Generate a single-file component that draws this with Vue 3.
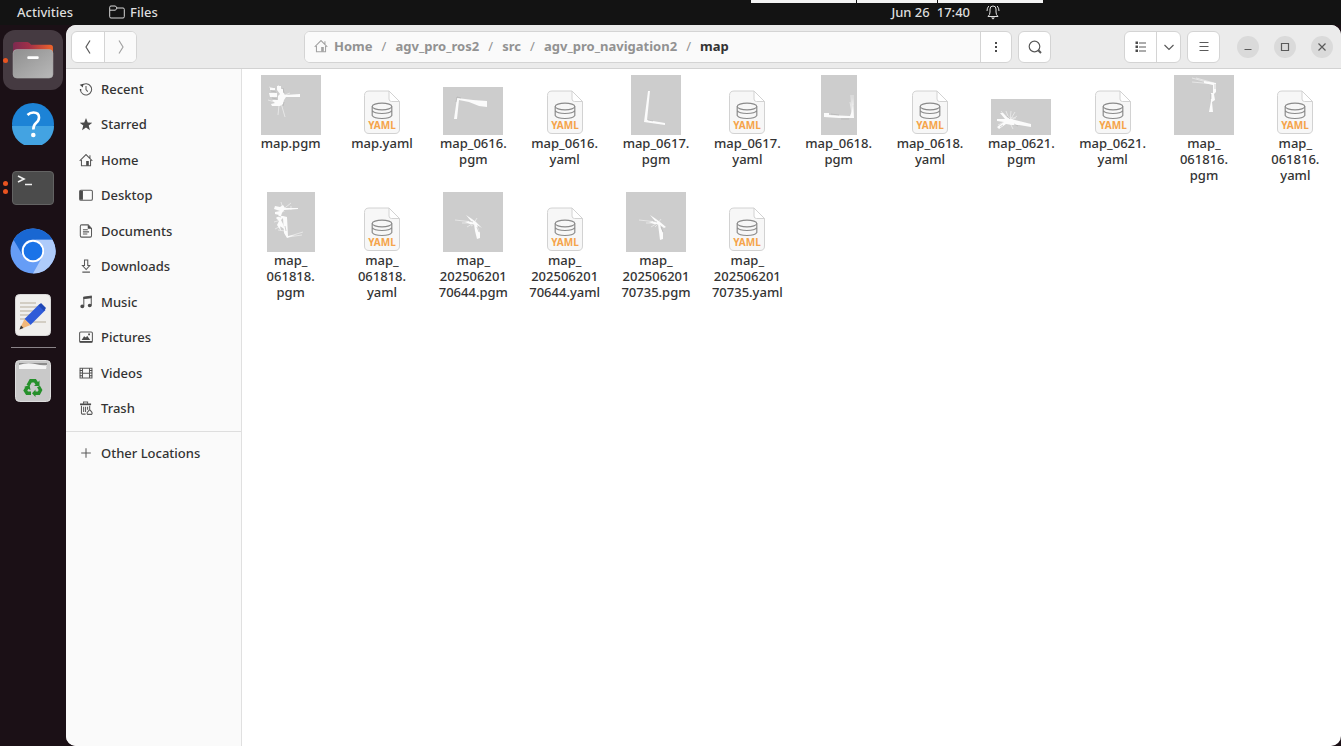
<script setup>
import { ref } from 'vue';

const activePlace = ref('');

const places = [
  {
    name: 'Recent',
    stroke: 'M3.2 4.2A6.4 6.4 0 1 1 1.6 8.6M8 4.5V8.6L10 11',
    fill: 'M0.8 3.2L5 2L4.4 6.2zM1 8h1.6v1.6H1z'
  },
  {
    name: 'Starred',
    stroke: '',
    fill: 'M8 1.2L10 6.2L15.2 6.5L11.1 9.8L12.5 15L8 12L3.5 15L4.9 9.8L0.8 6.5L6 6.2z'
  },
  {
    name: 'Home',
    stroke: 'M0.8 9L8 1.8L15.2 9M2.8 8V14.5H13.2V8M12.5 2.5V6',
    fill: 'M8.2 9h3v5.5h-3z'
  },
  {
    name: 'Desktop',
    stroke: 'M2.2 2.5H13.8Q15.3 2.5 15.3 4V12.5Q15.3 14 13.8 14H2.2Q0.7 14 0.7 12.5V4Q0.7 2.5 2.2 2.5z',
    fill: 'M1 3h3.5v10.5H1z'
  },
  {
    name: 'Documents',
    stroke: 'M3 1H10.5L14.3 5V13.5Q14.3 15 12.8 15H3Q1.5 15 1.5 13.5V2.5Q1.5 1 3 1zM4.5 6.5H10M4.5 9H11.5M4.5 11.5H9.5',
    fill: 'M10 1L14.5 5.5H10z'
  },
  {
    name: 'Downloads',
    stroke: 'M6.3 1.2H10V7.5H12.3L8.2 12L4 7.5H6.3zM3.8 15H12.5',
    fill: ''
  },
  {
    name: 'Music',
    stroke: 'M5.5 13V2.5L14 1.2V12M5.5 4L14 2.8',
    fill: 'M1.5 13a2.1 1.9 0 1 0 4.5 0a2.1 1.9 0 1 0-4.5 0M10 12a2.1 1.9 0 1 0 4.5 0a2.1 1.9 0 1 0-4.5 0M5 2.2L14.5 1v2.3L5 4.5z'
  },
  {
    name: 'Pictures',
    stroke: 'M2 2.2H14Q15.3 2.2 15.3 3.5V12.5Q15.3 14 14 14H2Q0.7 14 0.7 12.5V3.5Q0.7 2.2 2 2.2z',
    fill: 'M3 11.5L5.8 7L8 8.5L9.3 6.5L12.8 11.5zM10.5 4h2v2h-2zM1 12.5h14v1.8H1z'
  },
  {
    name: 'Videos',
    stroke: 'M1.2 2.5H14.8V13.8H1.2zM4 2.5V13.8M12 2.5V13.8M4 8.2H12',
    fill: 'M1 4.5h2.5v1.2H1zM1 7.5h2.5v1.2H1zM1 10.5h2.5v1.2H1zM12.5 4.5H15v1.2h-2.5zM12.5 7.5H15v1.2h-2.5zM12.5 10.5H15v1.2h-2.5z'
  },
  {
    name: 'Trash',
    stroke: 'M2.8 5.5V14Q2.8 15 4 15H7.5M12.2 5.5V9M5.3 6.5V12.5M7.5 6.5V12.5M9.8 6.5V10M5.2 3V1.2H9.8V3M9.8 15.3Q8.6 13.6 10 12.5L12.2 9.8L14.4 12.5Q15.6 14 14.4 15.3z',
    fill: 'M1.2 2.8h12.6v2H1.2z'
  }
];

const crumbs = ['Home', 'agv_pro_ros2', 'src', 'agv_pro_navigation2', 'map'];

// Occupancy maps: free space is white on the grey unknown area,
// rays are the thin laser traces around it and edges the dark walls
const pgm = (lines, width, height, map) => ({
  type: 'pgm', label: lines.join('\n'), width, height, ...map
});
const yaml = (...lines) => ({ type: 'yaml', label: lines.join('\n') });

const files = [
  pgm(['map.pgm'], 60, 60, {
    shape: 'M9 13H14V15H9zM8 18H16V22H9zM16 11H20V14H22V17L24 20L39 19V22L25 22L23 25L22 29L19 31H11L10 29L14 28L11 25L17 25V21L19 19L16 15z',
    rays: 'M8 12L14 14M17 10L20 14M20 28L24 42M18 30L17 40M7 25L14 27M24 20L29 18',
    edges: 'M10 16L15 17M11 23L16 24M22 13L23 18M23 27L22 31'
  }),
  yaml('map.yaml'),
  pgm(['map_0616.', 'pgm'], 60, 48, {
    shape: 'M14 11L30 13L44 14V20L36 19L26 15L16 13L14 32H11z',
    rays: '',
    edges: 'M13 15L14 10L18 11'
  }),
  yaml('map_0616.', 'yaml'),
  pgm(['map_0617.', 'pgm'], 50, 60, {
    shape: 'M17 16H19L16 45L34 48V50L13 47z',
    rays: '',
    edges: 'M17 45L22 46'
  }),
  yaml('map_0617.', 'yaml'),
  pgm(['map_0618.', 'pgm'], 36, 60, {
    shape: 'M3 38H8V40L29 41L31 36L32 22L33 43L18 43L3 42z',
    rays: 'M30 20L31 40M29 27L31 38M32 20V30',
    edges: 'M10 39L18 40M20 44L28 44'
  }),
  yaml('map_0618.', 'yaml'),
  pgm(['map_0621.', 'pgm'], 60, 36, {
    shape: 'M9 14L12 14L17 19L24 21L40 25V28L28 26L21 26L15 25L8 30L6 28L13 23L6 22V20L14 20z',
    rays: 'M10 12L19 23M20 12L19 22M24 13L18 23M26 17L18 23M7 26L17 21M19 24L22 30M25 19H17M15 12L18 20',
    edges: 'M16 17L19 20M23 25L27 27M12 26L9 28'
  }),
  yaml('map_0621.', 'yaml'),
  pgm(['map_', '061816.', 'pgm'], 60, 60, {
    shape: 'M30 6L42 8V17L40 19L41 25L38 27L39 37H35L37 26V18H39V10L30 8z',
    rays: 'M18 3L40 9M18 7L40 9M22 3L40 8',
    edges: 'M41 9V14M37 19V24'
  }),
  yaml('map_', '061816.', 'yaml'),
  pgm(['map_', '061818.', 'pgm'], 48, 60, {
    shape: 'M8 14L13 15L16 13L18 16H31V17L17 18L15 21L14 24H16L20 25L21 44L28 43L20 46L17 41L16 26L14 28L16 32L17 37L13 34L14 39L10 33L12 29L9 26L12 23L8 22V20L13 19L7 17z',
    rays: 'M20 45L36 40M21 45L35 43M14 10L17 20M24 11L14 19M8 37L16 33M11 38L18 39M7 30L14 28M24 14V18',
    edges: 'M10 24L14 25M18 34L19 39'
  }),
  yaml('map_', '061818.', 'yaml'),
  pgm(['map_', '202506201', '70644.pgm'], 60, 60, {
    shape: 'M23 23L29 27L33 30L39 36L34 33L37 41V46L34 47L32 39L31 32L27 32L22 30L28 29z',
    rays: 'M12 28L30 30M24 35L32 30M19 31L31 31M28 34L33 31M34 26L31 31',
    edges: 'M34 35L36 40M26 29L30 30'
  }),
  yaml('map_', '202506201', '70644.yaml'),
  pgm(['map_', '202506201', '70735.pgm'], 60, 60, {
    shape: 'M24 23L30 27L34 30L40 35L38 36L34 33L37 41V47L34 48L33 40L32 32L28 32L23 30L29 29z',
    rays: 'M13 28L31 30M25 35L33 30M20 31L32 31M29 35L33 31M35 27L32 31',
    edges: 'M35 35L37 40M27 29L31 30'
  }),
  yaml('map_', '202506201', '70735.yaml')
];
</script>

<template>
  <div class="desktop">
    <header class="top-bar">
      <button class="top-item">Activities</button>
      <button class="top-item app-menu">
        <svg width="16" height="14" viewBox="0 0 16 14" fill="none" stroke="#d8d8d8">
          <path d="M2 1H6.5L8 3H14Q15.3 3 15.3 4.3V11.7Q15.3 13 14 13H2Q0.7 13 0.7 11.7V2.3Q0.7 1 2 1zM1 5.2H6.5L8 3" />
        </svg>
        Files
      </button>
      <button class="top-item clock">
        <span>Jun 26</span>
        <span>17:40</span>
        <svg width="14" height="16" viewBox="0 0 14 16" fill="none" stroke="#e0e0e0">
          <path d="M2 12.5Q4 11 4 8V5Q4 2 7 2T10 5V8Q10 11 12 12.5zM2.8 2Q1 4 1 7M11.2 2Q13 4 13 7" />
          <path d="M5 13.5H9L7 15.5z" fill="#e0e0e0" stroke="none" />
        </svg>
      </button>
      <div class="screen-tab"><span></span><span></span><span></span></div>
    </header>

    <div class="workspace">
      <nav class="dock" aria-label="Dock">
        <div class="dock-apps">
          <button class="dock-item active" aria-label="Files">
            <i class="dots"><b></b></i>
            <svg width="42" height="38" viewBox="0 0 44 40">
              <defs>
                <linearGradient id="folderBack"><stop offset="0" stop-color="#7c2a50" /><stop offset="0.4" stop-color="#a03048" /><stop offset="1" stop-color="#f0642a" /></linearGradient>
                <linearGradient id="folderFront" x2="1" y2="1"><stop offset="0" stop-color="#8f8f8f" /><stop offset="1" stop-color="#b9b9b9" /></linearGradient>
              </defs>
              <path d="M4 1H16Q18 1 20 4H40Q43 4 43 7V22H1V4Q1 1 4 1z" fill="url(#folderBack)" />
              <rect x="1" y="9" width="42" height="30" rx="4" fill="url(#folderFront)" stroke="#b0b0b0" stroke-width="0.6" />
              <rect x="16" y="16" width="12" height="3" rx="1" fill="#fff" />
            </svg>
          </button>
          <button class="dock-item" aria-label="Help">
            <svg width="42" height="42" viewBox="0 0 42 42">
              <circle cx="21" cy="21" r="21" fill="#1d83d6" />
              <path d="M0 23H42A21 21 0 0 1 0 23z" fill="#43a3e2" />
              <path d="M15.5 12Q18 9.500 21.5 9.500Q27 9.500 27 14.500Q27 17.500 24 20Q21.300 22.300 21.300 26.500" fill="none" stroke="#fff" stroke-width="2.6" />
              <circle cx="21.3" cy="32" r="2.3" fill="#fff" />
            </svg>
          </button>
          <button class="dock-item" aria-label="Terminal">
            <i class="dots"><b></b><b></b></i>
            <svg width="42" height="34" viewBox="0 0 42 34">
              <rect x="0.5" y="0.5" width="41" height="33" rx="3.5" fill="#4b4b4b" stroke="#636363" />
              <path d="M6 5L12 8L6 11" fill="none" stroke="#f0f0f0" stroke-width="1.6" />
              <path d="M13 13.5H20" stroke="#f0f0f0" stroke-width="1.5" />
            </svg>
          </button>
          <button class="dock-item" aria-label="Chromium">
            <svg width="46" height="46" viewBox="0 0 46 46">
              <circle cx="23" cy="23" r="22.5" fill="#669df6" />
              <path d="M3.5 11.7A22.5 22.5 0 0 1 42.5 11.7H23A11 11 0 0 0 12.5 27z" fill="#1967d2" />
              <path d="M42.5 11.7A22.5 22.5 0 0 1 23 45.5L32.5 28.5A11 11 0 0 0 23 11.7z" fill="#aecbfa" />
              <circle cx="23" cy="23" r="11.2" fill="#fff" />
              <circle cx="23" cy="23" r="9.3" fill="#1a73e8" />
            </svg>
          </button>
          <button class="dock-item" aria-label="Text Editor">
            <svg width="36" height="42" viewBox="0 0 36 42">
              <rect x="0.5" y="0.5" width="35" height="41" rx="4" fill="#f0efed" stroke="#d8d8d8" />
              <path d="M5 9H21M5 13H25M5 17H21M5 21H16M5 25H13M16 28H31" stroke="#c9c4b6" stroke-width="1.3" />
              <path d="M24.5 10L30.5 16L15.5 31L9.5 25z" fill="#2f5bd8" />
              <path d="M26 9L31 14L29 17L23.5 11.5z" fill="#1f47b5" />
              <path d="M9.5 25L15.5 31L4.5 35.5z" fill="#f3b87a" />
              <path d="M6 31.5L8.5 34L4.5 35.5z" fill="#333" />
            </svg>
          </button>
        </div>
        <hr class="dock-line">
        <button class="dock-item" aria-label="Trash">
          <svg width="36" height="42" viewBox="0 0 36 42">
            <rect x="0.5" y="0.5" width="35" height="41" rx="4" fill="#c9c9c9" stroke="#dedede" />
            <path d="M4 3H32V6Q31 8 29 8H7Q4 8 4 6z" fill="#8c8c8c" />
            <path d="M4 9V5Q12 2 20 4T32 5L31 9z" fill="#f4f4f4" />
            <g fill="none" stroke="#26902b" stroke-width="3.4">
              <path d="M13 25.5L15.7 20.8H20L22 23.8" />
              <path d="M23.5 26.5L25.5 30L23.8 33.2H20" />
              <path d="M16 33.2H12L10.300 30.500L12.500 27" />
            </g>
            <path d="M24.500 20.500V26H19zM20.500 29.500V37L17 33.200zM9 27L14.500 25L15.500 30z" fill="#26902b" />
          </svg>
        </button>
      </nav>

      <main class="window">
        <div class="header-bar">
          <div class="button-group">
            <button class="tool wide" aria-label="Back">
              <svg width="16" height="16" viewBox="0 0 16 16"><path d="M10 1.5L6 8L10 14.5" /></svg>
            </button>
            <button class="tool wide disabled" aria-label="Forward">
              <svg width="16" height="16" viewBox="0 0 16 16"><path d="M6 1.5L10 8L6 14.5" /></svg>
            </button>
          </div>

          <div class="location">
            <div class="button-group path-bar">
              <nav class="crumbs" aria-label="Path">
                <svg class="home-icon" width="14" height="14" viewBox="0 0 16 16">
                  <path d="M0.8 9L8 1.8L15.2 9M2.8 8V14.5H13.2V8M12.5 2.5V6" />
                  <path class="solid" d="M8.2 9h3v5.5h-3z" />
                </svg>
                <template v-for="(crumb, index) in crumbs" :key="crumb">
                  <span v-if="index > 0" class="slash">/</span>
                  <a href="#" :class="{ current: index === crumbs.length - 1 }">{{ crumb }}</a>
                </template>
              </nav>
              <button class="tool" aria-label="Folder menu">
                <svg width="16" height="16" viewBox="0 0 16 16"><path class="solid" d="M7 3h2v2H7zM7 7h2v2H7zM7 11h2v2H7z" /></svg>
              </button>
            </div>
            <div class="button-group">
              <button class="tool" aria-label="Search">
                <svg width="16" height="16" viewBox="0 0 16 16"><circle cx="7.5" cy="7.5" r="5.3" /><path d="M11.3 11.3L14 14" stroke-width="2" /></svg>
              </button>
            </div>
          </div>

          <div class="button-group">
            <button class="tool" aria-label="List view">
              <svg width="16" height="16" viewBox="0 0 16 16">
                <path class="solid" d="M2.5 2.5h2.5v2.5H2.5zM2.5 6.5h2.5v2.5H2.5zM2.5 10.5h2.5v2.5H2.5z" />
                <path d="M6 4H13M6 8H13M6 12H13" />
              </svg>
            </button>
            <button class="tool narrow" aria-label="View options">
              <svg width="12" height="12" viewBox="0 0 12 12"><path d="M1.5 4L6 8.5L10.5 4" /></svg>
            </button>
          </div>
          <div class="button-group">
            <button class="tool" aria-label="Main menu">
              <svg width="16" height="16" viewBox="0 0 16 16"><path d="M3.5 3.5H12.5M3.5 7.5H12.5M3.5 11.5H12.5" /></svg>
            </button>
          </div>
          <div class="window-controls">
            <button aria-label="Minimize">
              <svg width="10" height="10" viewBox="0 0 10 10"><path d="M1.5 7.5H8.5" /></svg>
            </button>
            <button aria-label="Maximize">
              <svg width="10" height="10" viewBox="0 0 10 10"><path d="M1.5 1.5H8.5V8.5H1.5z" /></svg>
            </button>
            <button aria-label="Close">
              <svg width="10" height="10" viewBox="0 0 10 10"><path d="M1.5 1.5L8.5 8.5M8.5 1.5L1.5 8.5" /></svg>
            </button>
          </div>
        </div>

        <div class="body">
          <aside class="sidebar">
            <nav class="places">
              <a
                v-for="place in places"
                :key="place.name"
                href="#"
                class="place"
                :class="{ selected: activePlace === place.name }"
                @click.prevent="activePlace = place.name"
              >
                <svg width="14" height="14" viewBox="0 0 16 16">
                  <path :d="place.stroke" />
                  <path class="solid" :d="place.fill" />
                </svg>
                {{ place.name }}
              </a>
            </nav>
            <a href="#" class="place other">
              <svg width="14" height="14" viewBox="0 0 16 16"><path d="M8 2.5V13.5M2.5 8H13.5" /></svg>
              Other Locations
            </a>
          </aside>

          <section class="files">
            <div v-for="file in files" :key="file.label" class="file">
              <div class="thumb">
                <svg v-if="file.type === 'pgm'" :width="file.width" :height="file.height" :viewBox="`0 0 ${file.width} ${file.height}`">
                  <rect width="100%" height="100%" fill="#cdcdcd" />
                  <path :d="file.rays" fill="none" stroke="#ececec" stroke-width="0.8" />
                  <path :d="file.shape" fill="#fbfbfb" />
                  <path :d="file.edges" fill="none" stroke="#a8a8a8" stroke-width="0.5" />
                </svg>
                <svg v-else width="36" height="45" viewBox="0 0 36 45">
                  <path d="M5 1H25L35.5 11.5V39Q35.5 43.5 31 43.5H5Q0.5 43.5 0.5 39V5.5Q0.5 1 5 1z" fill="#f7f7f7" stroke="#d2d2d2" />
                  <path d="M25 1V9Q25 11.5 27.5 11.5H35.5z" fill="#fff" stroke="#d2d2d2" />
                  <g fill="none" stroke="#8b8b8b" stroke-width="1.2">
                    <ellipse cx="18" cy="16.5" rx="9.8" ry="3.3" />
                    <path d="M8.2 16.5V25.5Q10 28.5 18 28.5T27.8 25.5V16.5M8.2 20.5Q10 23.5 18 23.5T27.8 20.5" />
                  </g>
                  <text x="18" y="39" text-anchor="middle" class="yaml-mark">YAML</text>
                </svg>
              </div>
              <div class="file-name">{{ file.label }}</div>
            </div>
          </section>
        </div>
      </main>
    </div>
  </div>
</template>

<style>
body {
  background: #1b1016;
}
</style>

<style scoped>
.desktop {
  display: flex;
  flex-direction: column;
  min-height: 100vh;
  background: #1b1016;
  color: #333;
  font-family: "Noto Sans", "Open Sans", sans-serif;
  font-size: 13px;
  font-weight: 500;
  line-height: 16px;
}

.desktop * {
  box-sizing: border-box;
}

button {
  display: flex;
  align-items: center;
  justify-content: center;
  padding: 0;
  border: none;
  background: none;
  color: inherit;
  font: inherit;
}

a {
  color: inherit;
  text-decoration: none;
}

svg {
  display: block;
  flex: none;
}

.top-bar {
  position: relative;
  display: flex;
  align-items: center;
  height: 25px;
  padding: 0 341px 1px 17px;
  background: #131313;
  color: #dedede;
}

.app-menu {
  gap: 5px;
  margin-left: 36px;
}

.clock {
  gap: 7px;
  margin-left: auto;
}

.clock svg {
  margin-left: 9px;
}

.screen-tab {
  position: absolute;
  top: 0;
  left: 751px;
  display: grid;
  grid-template-columns: 4fr 3fr 4fr;
  gap: 1px;
  width: 292px;
  height: 3px;
}

.screen-tab span {
  background: #f4f4f4;
}

.workspace {
  display: flex;
  flex: 1;
}

.dock {
  display: flex;
  flex-direction: column;
  align-items: center;
  width: 66px;
  padding-top: 5px;
}

.dock-apps {
  display: flex;
  flex-direction: column;
  justify-content: space-between;
  height: 315px;
}

.dock-item {
  position: relative;
  width: 60px;
  height: 60px;
  border-radius: 12px;
}

.dock-item.active {
  background: #453a41;
}

.dots {
  position: absolute;
  top: 0;
  bottom: 0;
  left: 0;
  display: flex;
  flex-direction: column;
  justify-content: center;
  gap: 3px;
}

.dots b {
  width: 5px;
  height: 5px;
  border-radius: 50%;
  background: #e95420;
}

.dock-line {
  width: 45px;
  height: 1px;
  margin: 2px 0 3px;
  border: none;
  background: #8a8488;
}

.window {
  display: flex;
  flex: 1;
  flex-direction: column;
  overflow: hidden;
  border-radius: 10px;
  background: #fff;
}

.header-bar {
  display: flex;
  align-items: center;
  gap: 6px;
  height: 44px;
  padding: 0 8px 0 5px;
  border-bottom: 1px solid #d2d2d2;
  background: #ebebeb;
}

.button-group {
  display: flex;
  height: 32px;
  overflow: hidden;
  border: 1px solid #d4d4d4;
  border-radius: 6px;
  background: #fff;
}

.tool {
  width: 31px;
}

.tool + .tool,
.crumbs + .tool {
  border-left: 1px solid #d4d4d4;
}

.tool.wide {
  width: 32px;
}

.tool.narrow {
  width: 24px;
}

.tool.disabled {
  background: #fafafa;
}

.tool svg,
.home-icon,
.place svg,
.window-controls svg {
  fill: none;
  stroke: #5a5a5a;
  stroke-width: 1.2;
}

.tool.disabled svg,
.home-icon {
  stroke: #a3a3a3;
}

.tool .solid,
.place .solid {
  fill: #4a4a4a;
  stroke: none;
}

.home-icon .solid {
  fill: #a3a3a3;
  stroke: none;
}

.location {
  display: flex;
  flex: 1;
  gap: 6px;
  margin: 0 67px 0 161px;
}

.path-bar {
  flex: 1;
}

.crumbs {
  display: flex;
  flex: 1;
  align-items: center;
  padding: 0 0 1px 9px;
  background: #fafafa;
  color: #929292;
  font-weight: 700;
}

.home-icon {
  margin-right: 6px;
}

.slash {
  width: 23px;
  font-weight: 400;
  text-align: center;
}

.current {
  color: #333;
}

.window-controls {
  display: flex;
  gap: 15px;
  margin-left: 11px;
}

.window-controls button {
  width: 22px;
  height: 22px;
  border-radius: 50%;
  background: #dadada;
}

.body {
  display: flex;
  flex: 1;
}

.sidebar {
  width: 176px;
  padding-top: 2px;
  border-right: 1px solid #e0e0e0;
  background: #fafafa;
}

.places {
  display: flex;
  flex-direction: column;
  height: 355px;
}

.place {
  display: flex;
  flex: 1;
  align-items: center;
  gap: 8px;
  padding-left: 13px;
}

.place.selected {
  background: #e6e6e6;
}

.other {
  height: 42px;
  margin-top: 5px;
  border-top: 1px solid #dedede;
}

.files {
  display: grid;
  flex: 1;
  grid-template-columns: repeat(auto-fill, minmax(88px, 1fr));
  align-content: start;
  row-gap: 9px;
  padding: 6px 0 0 3px;
}

.file {
  text-align: center;
}

.thumb {
  display: flex;
  align-items: flex-end;
  justify-content: center;
  height: 60px;
}

.file-name {
  min-height: 48px;
  white-space: pre-line;
}

.yaml-mark {
  fill: #f5a44a;
  font-family: "Noto Sans", sans-serif;
  font-size: 10px;
  font-weight: 700;
}
</style>
